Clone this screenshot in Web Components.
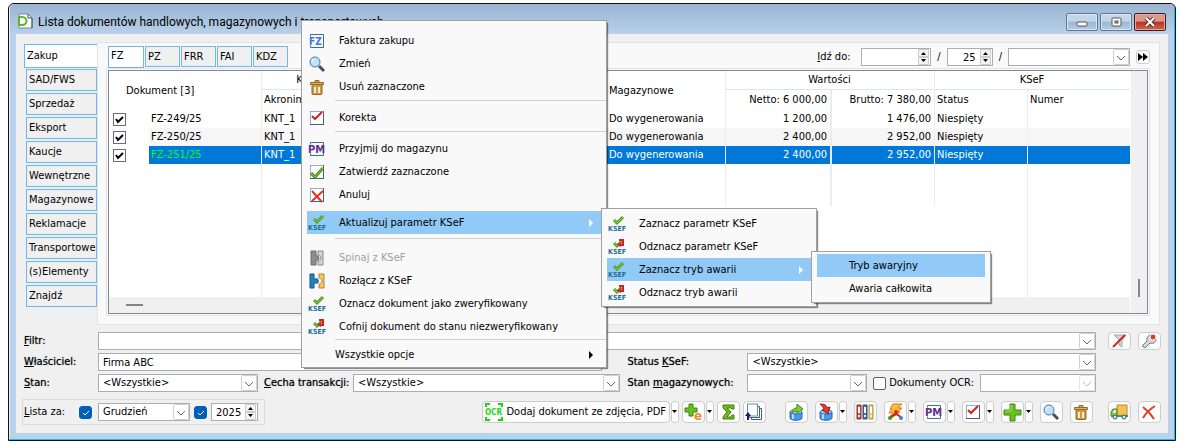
<!DOCTYPE html>
<html lang="pl">
<head>
<meta charset="utf-8">
<title>Lista dokumentów</title>
<style>
  :root {
    --ui-font: 11px/14px "DejaVu Sans Condensed", "Liberation Sans", sans-serif;
    --face: #f0f0f0;
    --panel: #f9f9f9;
    --line: #e3e3e3;
    --field-border: #abadb3;
    --tab-border: #6db7f7;
    --select: #0078d7;
    --hot: #91c9f7;
  }
  body {
    margin: 0;
    padding: 3px 10px 5px 8px;
    background: #fff;
    font: var(--ui-font);
    color: #000;
  }
  .workspace { display: flex; align-items: flex-start; }
  .filters {
    display: grid;
    grid-template-columns: 14fr 11fr;
    gap: 3px 7px;
    flex: 1;
  }
  .filters .full { grid-column: 1 / -1; }
  .bottom { display: flex; gap: 12px; margin: 7px 7px 0 8px; }
  .pair { display: flex; gap: 6px; }
  .side { display: flex; gap: 7px; height: 18px; --tool-height: 18px; }
  .grow { flex: 1; }
  .period {
    display: flex;
    align-items: center;
    gap: 4px;
    border: 1px solid #dcdcdc;
    padding: 3px 6px 3px 1px;
  }
  .footer {
    display: flex;
    justify-content: space-between;
    align-items: center;
    margin: 7px 7px 8px 6px;
  }
  .tools { display: flex; }
  .tools div { display: flex; gap: 7px; }
  .tools .add { gap: 3px; margin-right: 19px; }
  .tools .last { margin-left: 15px; }
</style>
</head>
<body>
<app-window>
  <span slot="title">Lista dokumentów handlowych, magazynowych i transportowych</span>

  <div class="workspace">
    <side-tabs></side-tabs>
    <doc-panel></doc-panel>
  </div>

  <div class="bottom">
    <div class="filters">
      <field-box class="full" kind="select"><u>F</u>iltr:</field-box>
      <field-box kind="text" value="Firma ABC" style="margin-right: 18px"><u>W</u>łaściciel:</field-box>
      <field-box kind="select" value="&lt;Wszystkie&gt;" style="--cap: 120px">Status <u>K</u>SeF:</field-box>
      <div class="pair">
        <field-box kind="select" value="&lt;Wszystkie&gt;" style="width: 234px"><u>S</u>tan:</field-box>
        <field-box class="grow" kind="select" value="&lt;Wszystkie&gt;" style="--cap: 89px"><u>C</u>echa transakcji:</field-box>
      </div>
      <div class="pair">
        <field-box class="grow" kind="select" style="--cap: 120px">Stan <u>m</u>agazynowych:</field-box>
        <tick-box>Dokumenty OCR:</tick-box>
        <field-box kind="select" disabled aria="Dokumenty OCR" style="--cap: 0px; width: 116px"></field-box>
      </div>
    </div>
    <div class="side">
      <tool-button icon="nofilter" label="Wyczyść filtr"></tool-button>
      <tool-button icon="wrench" label="Konstruktor filtra"></tool-button>
    </div>
  </div>

  <div class="footer">
    <div class="period">
      <tick-box blue checked lead><u>L</u>ista za:</tick-box>
      <field-box kind="select" value="Grudzień" aria="Miesiąc" style="--cap: 0px; width: 92px"></field-box>
      <tick-box blue checked aria="Rok"></tick-box>
      <field-box kind="number" value="2025" aria="Rok" style="--cap: 0px; width: 47px"></field-box>
    </div>
    <div class="tools">
      <div class="add">
        <tool-button icon="ocr" drop>Dodaj dokument ze zdjęcia, PDF</tool-button>
        <tool-button icon="pluse" drop label="Dodaj e-dokument"></tool-button>
        <tool-button icon="sigma" label="Sumuj"></tool-button>
        <tool-button icon="pages" label="Kopiuj"></tool-button>
      </div>
      <div>
        <tool-button icon="dbup" label="Eksport"></tool-button>
        <tool-button icon="dbdown" drop label="Import"></tool-button>
        <tool-button icon="binders" label="Księgi"></tool-button>
        <tool-button icon="bolt" drop label="Akcje"></tool-button>
        <tool-button icon="pm" drop label="Przyjmij do magazynu"></tool-button>
        <tool-button icon="redcheck" drop label="Korekta"></tool-button>
        <tool-button icon="plus" drop label="Dodaj"></tool-button>
        <tool-button icon="lens" label="Zmień"></tool-button>
        <tool-button icon="trash" label="Usuń"></tool-button>
      </div>
      <div class="last">
        <tool-button icon="truck" label="Transport"></tool-button>
        <tool-button icon="cross" label="Zamknij"></tool-button>
      </div>
    </div>
  </div>

  <context-menu slot="popup" style="left: 292px; top: 16px; width: 306px; --pad: 8px 5px 1px">
    <menu-item icon="fz">Faktura zakupu</menu-item>
    <menu-item icon="lens">Zmień</menu-item>
    <menu-item icon="trash">Usuń zaznaczone</menu-item>
    <menu-line></menu-line>
    <menu-item icon="redcheck">Korekta</menu-item>
    <menu-line></menu-line>
    <menu-item icon="pm">Przyjmij do magazynu</menu-item>
    <menu-item icon="greencheck">Zatwierdź zaznaczone</menu-item>
    <menu-item icon="boxcross">Anuluj</menu-item>
    <menu-item icon="ksef" open style="margin-top: 5px">Aktualizuj parametr KSeF
      <context-menu slot="submenu" style="left: 100%; top: -3px; width: 216px; --pad: 3px 5px 2px">
        <menu-item icon="ksef">Zaznacz parametr KSeF</menu-item>
        <menu-item icon="ksefundo">Odznacz parametr KSeF</menu-item>
        <menu-item icon="ksef" open>Zaznacz tryb awarii
          <context-menu slot="submenu" style="left: 100%; top: -7px; width: 180px; --pad: 2px 5px">
            <menu-item hot>Tryb awaryjny</menu-item>
            <menu-item>Awaria całkowita</menu-item>
          </context-menu>
        </menu-item>
        <menu-item icon="ksefundo">Odznacz tryb awarii</menu-item>
      </context-menu>
    </menu-item>
    <menu-line wide></menu-line>
    <menu-item icon="puzzlegrey" disabled>Spinaj z KSeF</menu-item>
    <menu-item icon="puzzle">Rozłącz z KSeF</menu-item>
    <menu-item icon="ksef">Oznacz dokument jako zweryfikowany</menu-item>
    <menu-item icon="ksefundo">Cofnij dokument do stanu niezweryfikowany</menu-item>
    <menu-line tight></menu-line>
    <menu-item flush more>Wszystkie opcje</menu-item>
  </context-menu>
</app-window>

<script>
const page = '<path d="M4 1.500h10.500v13H4M1.500 3.500V1.500h3M1.500 12.500v2h3" fill="none" stroke="#3f6a9c"/>';
const box = '<rect x="1.500" y="1.500" width="13" height="13" fill="#fff" stroke="#3f6186"/><path d="M1.500 14V1.500H14" fill="none" stroke="#8fb0cf"/>';
const ksef = '<path d="M5 4l3 3 6-6" fill="none" stroke="#4f9a1e" stroke-width="3"/><path d="M5 4l3 3 6-6" fill="none" stroke="#8fd046" stroke-width="1"/>' +
  '<text x="-1" y="15" font-family="DejaVu Sans Condensed" font-weight="bold" font-size="7" fill="#1d6f94">KSEF</text>';
const cyl = '<path d="M2 8v6c0 3 12 3 12 0V8" fill="#4a97ea" stroke="#2467b8"/><path d="M5 9v6" stroke="#b7dcff" stroke-width="2"/><ellipse cx="8" cy="8" rx="6" ry="2" fill="#a8d3fb" stroke="#2467b8"/>';

const ICONS = {
  app: '<path d="M2 1h9l4 4v10H2z" fill="#fff" stroke="#6b8e9e"/><path d="M11 1v4h4v10" fill="none" stroke="#2d5a6b"/><path d="M2 4h3c6 0 6 8 0 8H2z" fill="#fff" stroke="#62b22c" stroke-width="2"/>',
  fz: page + '<rect x="0" y="4" width="13" height="8" fill="#f9f9f9"/><text x="0" y="12" font-family="DejaVu Sans Condensed" font-weight="bold" font-size="10" fill="#3b78e7">FZ</text>',
  pm: page + '<rect x="0" y="4" width="16" height="8" fill="#fafafa"/><text x="-1" y="12" font-family="DejaVu Sans Condensed" font-weight="bold" font-size="11" fill="#5b2d90">PM</text>',
  lens: '<path d="M10 10l5 5" stroke="#4a4f57" stroke-width="3"/><circle cx="6" cy="6" r="5" fill="#bfe2fb" stroke="#4d7ba6"/><path d="M3 6c0-2 2-3 3-3" fill="none" stroke="#fff"/>',
  trash: '<path d="M3 5.500h10V15l-1 .500H4L3 15z" fill="#c99a4b" stroke="#96692a"/><path d="M1.500 3.500h13v2h-13zM6 1.500h4v2H6z" fill="#dcb269" stroke="#96692a"/><path d="M6 8v6M10 8v6" stroke="#fbeccb" stroke-width="2"/>',
  redcheck: box + '<path d="M3 6l3 3 7-7" fill="none" stroke="#d81e1e" stroke-width="2"/>',
  greencheck: box + '<path d="M2 9l4 4 8-9" fill="none" stroke="#4d8f16" stroke-width="3"/><path d="M2 9l4 4 8-9" fill="none" stroke="#84c93a"/>',
  boxcross: box + '<path d="M3 4l10 11M14 4L3 14" fill="none" stroke="#e8321e" stroke-width="2"/>',
  cross: '<path d="M2 3c4 3 8 7 11 12M14 2C9 5 5 9 2 14" fill="none" stroke="#e83a24" stroke-width="2"/>',
  ksef,
  ksefundo: ksef + '<path d="M10 1h4v5h-4" fill="none" stroke="#e01b24" stroke-width="2"/><path d="M12 3v5L8 6z" fill="#e01b24"/>',
  puzzlegrey: '<path d="M2 1h5v5c4-2 4 6 0 4v5H2z" fill="#8d8d8d" stroke="#6d6d6d"/><path d="M9 1h5v14H9v-4c4 0 4-6 0-6z" fill="#d5d5d5" stroke="#8b8b8b"/>',
  puzzle: '<path d="M1 1h4v5h2c3-2 3 6 0 4H5v5H1z" fill="#1f86c6" stroke="#13537f"/><path d="M10 1h5v14h-5v-4c4 0 4-6 0-6z" fill="#f6c766" stroke="#b9802a"/>',
  ocr: '<path d="M1 3V0h4M13 0h4v3M1 13v3h4M13 16h4v-3" fill="none" stroke="#17d817" stroke-width="2"/><text x="0" y="11" font-family="DejaVu Sans Condensed" font-weight="bold" font-size="8" fill="#17d817">OCR</text>',
  pluse: '<path d="M4 0h4v4h4v4H8v4H4V8H0V4h4z" fill="#6abf1c" stroke="#3d8512"/><text x="9" y="16" font-family="DejaVu Sans" font-weight="bold" font-size="12" fill="#ee8a2d">e</text>',
  sigma: '<path d="M3 1h11v4h-2l-1-1H7l4 4-4 5h4l1-2h2v4H3v-2l4-5-4-4z" fill="#6fb81c" stroke="#3f8010"/>',
  pages: '<path d="M5.500 4.500h10v11h-10z" fill="#fff" stroke="#3f6186"/><path d="M3.500 2.500h10v11h-10z" fill="#fff" stroke="#3f6186"/><rect x="1.500" y="0" width="10" height="12" fill="#fff" stroke="#6d8cad"/><path d="M2 16v-5" stroke="#1d1b62" stroke-width="2"/><path d="M-1 12l3-4 3 4z" fill="#1d1b62"/>',
  dbup: cyl + '<path d="M4 10c0-4 1-6 5-6V0l6 5-6 4V7C6 7 5 8 4 10z" fill="#7fce2f" stroke="#438c10"/>',
  dbdown: cyl + '<path d="M2 0c4 0 7 1 7 4l3-1-2 7-6-4 2-1C6 4 4 2 2 0z" fill="#e83a2c" stroke="#9d1717"/>',
  binders: '<path d="M0 1h4v14H0z" fill="#d9533c" stroke="#8f2a1c"/><path d="M6 1h4v14H6z" fill="#3f77bd" stroke="#24497c"/><path d="M12 1h4v14h-4z" fill="#ecd37c" stroke="#a88a37"/><path d="M2 3v6M8 3v6M14 3v6" stroke="#fff" stroke-width="2"/><path d="M1 12h2M7 12h2M13 12h2" stroke="#eee" stroke-width="2"/>',
  bolt: '<path d="M6 0h9l-4 4h4l-4 4h2L3 15l3-6H2l3-4H3z" fill="#ffbe3c" stroke="#e8730f"/><path d="M9 7v3l-6 3M9 10l5 3" fill="none" stroke="#b02a20" stroke-width="2"/><circle cx="9" cy="8" r="2" fill="#d8291d"/><circle cx="3" cy="14" r="2" fill="#3a9a26"/><circle cx="14" cy="14" r="2" fill="#3e82cc"/>',
  plus: '<path d="M6 0h5v6h6v5h-6v6H6v-6H0V6h6z" fill="#6abf1c" stroke="#3d8512"/><path d="M7 1v6H1" fill="none" stroke="#a9e268"/>',
  truck: '<path d="M6 1h10v11H6z" fill="#f5c153" stroke="#c08a24"/><path d="M0 12V8l2-3h4v7z" fill="#8ac73c" stroke="#4d8516"/><path d="M3 6h2v3H2z" fill="#dff1fb"/><path d="M0 12h17" stroke="#5d9a1e" stroke-width="2"/><circle cx="4" cy="13" r="2" fill="#cfe8fb" stroke="#1e5da6"/><circle cx="13" cy="13" r="2" fill="#cfe8fb" stroke="#1e5da6"/>',
  nofilter: '<path d="M3 2h12l-4 5v7l-3-2V7z" fill="#cfd3d3" stroke="#a3a9a9"/><path d="M2 14L14 2" stroke="#d7262b" stroke-width="2"/>',
  wrench: '<path d="M1 13l5-5C5 4 8 1 13 2l-3 3 1 2 4-1c0 4-3 5-6 4l-5 5z" fill="#d4d7d8" stroke="#74797c"/><circle cx="12" cy="4" r="3" fill="#e13a1c" stroke="#fff"/>'
};

function svg(name) {
  const width = name === 'ocr' ? 18 : 16;
  return `<svg viewBox="0 0 ${width} 16" width="${width}" height="16" aria-hidden="true">${ICONS[name] || ''}</svg>`;
}

class AppWindow extends HTMLElement {
  constructor() {
    super();
    this.attachShadow({ mode: 'open' }).innerHTML = `
      <style>
        :host {
          display: block;
          position: relative;
          border: 1px solid #111;
          border-radius: 6px 6px 0 0;
          background: #b9d1ea;
          box-shadow: inset -1px -1px #18c0dd, inset 1px 1px #e4eef8;
          padding: 0 7px 7px;
        }
        header {
          display: flex;
          align-items: center;
          gap: 5px;
          height: 30px;
          margin: 0 -6px;
          padding: 0 8px 0 7px;
          background: linear-gradient(#99b4d1, #b9d1ea);
          border-radius: 5px 5px 0 0;
          font: 12px/16px Roboto, "Open Sans", sans-serif;
        }
        .title { flex: 1; padding-top: 5px; }
        header svg { margin-top: 4px; }
        .buttons { display: flex; gap: 2px; padding-top: 5px; }
        .buttons button {
          width: 32px;
          height: 18px;
          padding: 0;
          border: 1px solid #5b7899;
          border-radius: 2px;
          background: linear-gradient(#c3d5e8 45%, #9db7d2 50%, #b4cbe2);
          box-shadow: inset 0 0 0 1px #d8e5f2;
        }
        .buttons svg { display: block; margin: auto; }
        .buttons .close {
          border-color: #4a1620;
          background: linear-gradient(#dd9a8c 45%, #b9311f 50%, #cf6852);
          box-shadow: inset 0 0 0 1px #e3a99d;
        }
        main { display: block; background: var(--face); overflow: hidden; }
      </style>
      <header>
        ${svg('app')}
        <span class="title"><slot name="title"></slot></span>
        <div class="buttons">
          <button aria-label="Minimalizuj"><svg width="14" height="10"><rect x="2" y="5" width="10" height="4" rx="1" fill="#fff" stroke="#555"/></svg></button>
          <button aria-label="Maksymalizuj"><svg width="14" height="10"><rect x="3" y="1" width="9" height="8" rx="1" fill="#fff" stroke="#555"/><rect x="6" y="4" width="3" height="2" fill="#9db7d2" stroke="#555"/></svg></button>
          <button class="close" aria-label="Zamknij"><svg width="14" height="10"><path d="M3 1l8 8M11 1L3 9" stroke="#55303a" stroke-width="4"/><path d="M3 1l8 8M11 1L3 9" stroke="#fff" stroke-width="2"/></svg></button>
        </div>
      </header>
      <main><slot></slot></main>
      <slot name="popup"></slot>
    `;
  }
}

class SideTabs extends HTMLElement {
  constructor() {
    super();
    const tabs = ['Zakup', 'SAD/FWS', 'Sprzedaż', 'Eksport', 'Kaucje', 'Wewnętrzne',
      'Magazynowe', 'Reklamacje', 'Transportowe', '(s)Elementy', 'Znajdź'];
    this.attachShadow({ mode: 'open' }).innerHTML = `
      <style>
        :host { display: block; width: 81px; padding-top: 10px; flex: none; }
        nav { display: flex; flex-direction: column; gap: 2px; padding-left: 10px; }
        button {
          height: 22px;
          padding: 0 0 1px 2px;
          border: 1px solid var(--tab-border);
          background: var(--face);
          font: inherit;
          text-align: left;
          overflow: hidden;
        }
        button.on { height: 24px; margin: 0 -1px -1px -2px; background: #fff; }
      </style>
      <nav>${tabs.map((t, i) => `<button class="${i ? '' : 'on'}">${t}</button>`).join('')}</nav>
    `;
  }
}

class DocPanel extends HTMLElement {
  constructor() {
    super();
    this.attachShadow({ mode: 'open' }).innerHTML = `
      <style>
        :host {
          display: block;
          flex: 1;
          min-width: 0;
          margin: 8px 8px 0 0;
          border: 1px solid var(--line);
          background: var(--panel);
          padding: 3px 9px 8px 8px;
        }
        .top { display: flex; justify-content: space-between; height: 22px; }
        nav { display: flex; gap: 1px; align-items: flex-start; padding-left: 2px; }
        nav button {
          width: 35px;
          height: 21px;
          padding: 0 0 0 2px;
          border: 1px solid var(--tab-border);
          background: var(--face);
          font: inherit;
          text-align: left;
        }
        nav button.on { width: 36px; height: 22px; background: #fff; padding-bottom: 2px; }
        .goto { display: flex; align-items: center; gap: 6px; }
        .next {
          width: 14px;
          height: 14px;
          padding: 0;
          border: 1px solid #ccc;
          border-radius: 3px;
          background: #fdfdfd;
        }
        .next svg { display: block; }
        .inner { border: 1px solid var(--line); padding: 1px; }
      </style>
      <div class="top">
        <nav><button class="on">FZ</button><button>PZ</button><button>FRR</button><button>FAI</button><button>KDZ</button></nav>
        <div class="goto">
          <field-box plain kind="number" style="--cap: 44px; width: 114px"><u>I</u>dź do:</field-box>
          <span>/</span>
          <field-box kind="number" value="25" aria="Liczba" style="--cap: 0px; width: 46px"></field-box>
          <span>/</span>
          <field-box kind="select" aria="Widok" style="--cap: 0px; width: 122px"></field-box>
          <button class="next" aria-label="Dalej"><svg width="12" height="12"><path d="M1 2l5 4-5 4zM6 2l5 4-5 4z"/></svg></button>
        </div>
      </div>
      <div class="inner"><doc-table></doc-table></div>
    `;
  }
}

class DocTable extends HTMLElement {
  constructor() {
    super();
    const docs = [
      ['FZ-249/25', 'KNT_1', 'Do wygenerowania', '1 200,00', '1 476,00', 'Niespięty'],
      ['FZ-250/25', 'KNT_1', 'Do wygenerowania', '2 400,00', '2 952,00', 'Niespięty'],
      ['FZ-251/25', 'KNT_1', 'Do wygenerowania', '2 400,00', '2 952,00', 'Niespięty']
    ];
    const rows = docs.map((d, i) => `
      <tr class="${['', 'alt', 'sel'][i]}">
        <td class="chk"><input type="checkbox" checked aria-label="${d[0]}"></td>
        <td class="doc v">${d[0]}</td><td>${d[1]}</td><td></td>
        <td class="v">${d[2]}</td><td class="num w">${d[3]}</td><td class="num v">${d[4]}</td>
        <td class="v">${d[5]}</td><td></td>
      </tr>`).join('');
    this.attachShadow({ mode: 'open' }).innerHTML = `
      <style>
        :host {
          display: grid;
          grid-template-columns: 1fr 16px;
          gap: 0 1px;
          border: 1px solid #828790;
          background: #fff;
        }
        table { width: 100%; border-collapse: separate; border-spacing: 0; table-layout: fixed; }
        th, td {
          padding: 0 3px 0 2px;
          font-weight: normal;
          text-align: left;
          white-space: nowrap;
          box-sizing: border-box;
        }
        th { height: 20px; }
        td { height: 18px; }
        .groups th { height: 19px; }
        .groups .g { border-bottom: 1px solid #dbe5ef; text-align: center; }
        .first { padding-left: 17px; }
        .num { text-align: right; }
        .v { border-right: 1px solid #ececec; }
        .w { border-right: 2px solid #ececec; }
        .chk { background: #fff; padding: 0 0 0 4px; }
        .chk input {
          appearance: none;
          display: block;
          width: 13px;
          height: 13px;
          margin: 0;
          border: 1px solid #70658d;
          background: #fff url("data:image/svg+xml,%3Csvg xmlns='http://www.w3.org/2000/svg' width='11' height='11'%3E%3Cpath d='M2 5l2 3 5-5' fill='none' stroke='%23000' stroke-width='2'/%3E%3C/svg%3E") center no-repeat;
        }
        .alt td:not(.chk) { background: #f6f6f6; }
        .sel td:not(.chk) { background: var(--select); color: #fff; }
        .sel td.doc { color: #00ff2a; }
        .space td { height: 42px; }
        .rest td { height: 91px; }
        .hbar, .vbar { background: var(--face); }
        .vbar { grid-row: 1 / 3; grid-column: 2; display: flex; align-items: flex-end; justify-content: center; padding-bottom: 16px; }
        .vbar i { width: 2px; height: 18px; background: #858585; }
        .hbar { height: 16px; display: flex; align-items: center; padding-left: 17px; }
        .hbar i { width: 17px; height: 2px; background: #858585; }
      </style>
      <table>
        <colgroup>
          <col style="width: 40px"><col style="width: 113px"><col style="width: 98px"><col>
          <col style="width: 119px"><col style="width: 106px"><col style="width: 103px">
          <col style="width: 93px"><col style="width: 102px">
        </colgroup>
        <thead>
          <tr class="groups">
            <th colspan="2" rowspan="2" class="first v">Dokument [3]</th>
            <th class="g">Kontr.</th><th rowspan="2"></th>
            <th rowspan="2" class="v">Magazynowe</th>
            <th colspan="2" class="g v">Wartości</th>
            <th colspan="2" class="g">KSeF</th>
          </tr>
          <tr>
            <th>Akronim</th><th class="num w">Netto: 6 000,00</th><th class="num v">Brutto: 7 380,00</th>
            <th class="v">Status</th><th>Numer</th>
          </tr>
        </thead>
        <tbody>
          ${rows}
          <tr class="space"><td></td><td class="v"></td><td></td><td></td><td class="v"></td><td class="w"></td><td class="v"></td><td class="v"></td><td></td></tr>
          <tr class="rest"><td></td><td class="v"></td><td></td><td></td><td></td><td></td><td></td><td class="v"></td><td></td></tr>
        </tbody>
      </table>
      <div class="vbar"><i></i></div>
      <div class="hbar"><i></i></div>
    `;
  }
}

// Labelled drop-down, text or number field; the label is the slotted content.
class FieldBox extends HTMLElement {
  constructor() {
    super();
    this.attachShadow({ mode: 'open' });
  }
  connectedCallback() {
    const kind = this.getAttribute('kind');
    const value = (this.getAttribute('value') || '').replace(/</g, '&lt;');
    const aria = this.hasAttribute('aria') ? `aria-label="${this.getAttribute('aria')}"` : '';
    const off = this.hasAttribute('disabled') ? 'disabled' : '';
    const control = kind === 'select'
      ? `<select id="f" ${aria} ${off}><option>${value}</option></select>`
      : `<input id="f" type="${kind}" value="${value}" ${aria}>`;
    this.shadowRoot.innerHTML = `
      <style>
        :host { display: flex; align-items: center; min-width: 0; }
        label { width: var(--cap, 74px); flex: none; white-space: nowrap; text-shadow: 0 0 1px rgba(0,0,0,.6); }
        :host([plain]) label { text-shadow: none; }
        select, input {
          appearance: none;
          flex: 1;
          min-width: 0;
          width: 100%;
          height: 18px;
          box-sizing: border-box;
          margin: 0;
          padding: 0 18px 0 4px;
          border: 1px solid var(--field-border);
          border-radius: 0;
          background: #fff;
          color: #000;
          font: inherit;
        }
        select {
          background: #fff url("data:image/svg+xml,%3Csvg xmlns='http://www.w3.org/2000/svg' width='16' height='16'%3E%3Crect x='.5' y='.5' width='15' height='15' rx='1' fill='%23fff' stroke='%23cfcfcf'/%3E%3Cpath d='M4 7l4 4 4-4' fill='none' stroke='%23666'/%3E%3C/svg%3E") right center no-repeat;
        }
        select:disabled { opacity: 1; background-image: url("data:image/svg+xml,%3Csvg xmlns='http://www.w3.org/2000/svg' width='16' height='16'%3E%3Crect x='.5' y='.5' width='15' height='15' rx='1' fill='%23fff' stroke='%23e3e3e3'/%3E%3Cpath d='M4 7l4 4 4-4' fill='none' stroke='%23bbb'/%3E%3C/svg%3E"); }
        input[type=number] {
          appearance: textfield;
          text-align: right;
          padding-right: 16px;
          background: #fff url("data:image/svg+xml,%3Csvg xmlns='http://www.w3.org/2000/svg' width='12' height='16'%3E%3Cpath d='M.5.500h10v7H.5zM.5 8.500h10v7H.5z' fill='%23f3f3f3' stroke='%23ccc'/%3E%3Cpath d='M3 6l2.500-3L8 6zM3 10l2.500 3L8 10z'/%3E%3C/svg%3E") right center no-repeat;
        }
        input::-webkit-inner-spin-button { appearance: none; }
      </style>
      <label for="f"><slot></slot></label>${control}
    `;
  }
}

class TickBox extends HTMLElement {
  constructor() {
    super();
    this.attachShadow({ mode: 'open' });
  }
  connectedCallback() {
    const aria = this.hasAttribute('aria') ? `aria-label="${this.getAttribute('aria')}"` : '';
    this.shadowRoot.innerHTML = `
      <style>
        :host { display: block; white-space: nowrap; }
        label { display: flex; align-items: center; gap: 3px; height: 18px; }
        :host([blue]) label { gap: 0; }
        :host([lead]) label { flex-direction: row-reverse; padding-right: 2px; }
        :host([lead]) span { width: 55px; }
        input {
          appearance: none;
          width: 13px;
          height: 13px;
          margin: 0;
          border: 1px solid #626262;
          border-radius: 2px;
          background: #fff;
        }
        :host([blue]) input {
          border-color: #005fb8;
          border-radius: 3px;
          background: #005fb8 url("data:image/svg+xml,%3Csvg xmlns='http://www.w3.org/2000/svg' width='11' height='11'%3E%3Cpath d='M3 6l2 2 4-4' fill='none' stroke='%23fff'/%3E%3C/svg%3E") center no-repeat;
        }
      </style>
      <label><input type="checkbox" ${aria} ${this.hasAttribute('checked') ? 'checked' : ''}><span><slot></slot></span></label>
    `;
  }
}

class ToolButton extends HTMLElement {
  constructor() {
    super();
    this.attachShadow({ mode: 'open' });
  }
  connectedCallback() {
    const label = this.getAttribute('label');
    const drop = this.hasAttribute('drop')
      ? '<button class="drop" aria-label="Więcej"><svg width="6" height="4"><path d="M0 0h5L2.500 3z"/></svg></button>' : '';
    this.shadowRoot.innerHTML = `
      <style>
        :host { display: flex; gap: 1px; }
        button {
          display: flex;
          align-items: center;
          gap: 3px;
          min-width: 23px;
          height: var(--tool-height, 22px);
          padding: 0 3px 0 2px;
          box-sizing: border-box;
          border: 1px solid #cdcdcd;
          border-radius: 4px;
          background: #fdfdfd;
          font: inherit;
          color: #000;
          white-space: nowrap;
        }
        button svg { overflow: visible; flex: none; }
        .drop { min-width: 8px; width: 8px; padding: 0; border-radius: 3px; }
      </style>
      <button ${label ? `aria-label="${label}"` : ''}>${svg(this.getAttribute('icon'))}<slot></slot></button>${drop}
    `;
  }
}

class ContextMenu extends HTMLElement {
  constructor() {
    super();
    this.attachShadow({ mode: 'open' }).innerHTML = `
      <style>
        :host {
          display: block;
          position: absolute;
          z-index: 5;
          box-sizing: border-box;
          padding: var(--pad);
          border: 1px solid #a0a0a0;
          background: var(--panel);
          box-shadow: 2px 2px 1px -1px rgba(0,0,0,.45);
        }
      </style>
      <slot></slot>
    `;
  }
}

class MenuItem extends HTMLElement {
  constructor() {
    super();
    this.attachShadow({ mode: 'open' });
  }
  connectedCallback() {
    const arrow = this.hasAttribute('open') || this.hasAttribute('more')
      ? '<svg class="arrow" width="5" height="8"><path d="M0 0l4 4-4 4z" fill="currentColor"/></svg>' : '';
    this.shadowRoot.innerHTML = `
      <style>
        :host { display: block; position: relative; }
        button {
          display: flex;
          align-items: center;
          gap: 14px;
          width: 100%;
          height: 23px;
          padding: 0 7px 0 2px;
          border: 0;
          background: none;
          font: inherit;
          color: #000;
          white-space: nowrap;
        }
        :host([open]) button, :host([hot]) button { background: var(--hot); }
        :host([disabled]) button { color: #a0a0a0; }
        :host([flush]) button { gap: 10px; }
        svg { flex: none; overflow: visible; }
        .arrow { margin-left: auto; }
        :host([open]) .arrow { color: #fff; }
      </style>
      <button role="menuitem" ${this.hasAttribute('disabled') ? 'disabled' : ''}>${svg(this.getAttribute('icon'))}<span><slot></slot></span>${arrow}</button>
      <slot name="submenu"></slot>
    `;
  }
}

class MenuLine extends HTMLElement {
  constructor() {
    super();
    this.attachShadow({ mode: 'open' }).innerHTML = `
      <style>
        :host { display: block; height: 1px; margin: 2px -5px 5px 28px; background: #d0d0d0; }
        :host([wide]) { margin-top: 4px; margin-bottom: 7px; }
        :host([tight]) { margin-top: 1px; margin-bottom: 3px; }
      </style>
    `;
  }
}

customElements.define('app-window', AppWindow);
customElements.define('side-tabs', SideTabs);
customElements.define('field-box', FieldBox);
customElements.define('tick-box', TickBox);
customElements.define('doc-table', DocTable);
customElements.define('doc-panel', DocPanel);
customElements.define('tool-button', ToolButton);
customElements.define('context-menu', ContextMenu);
customElements.define('menu-item', MenuItem);
customElements.define('menu-line', MenuLine);
</script>
</body>
</html>
